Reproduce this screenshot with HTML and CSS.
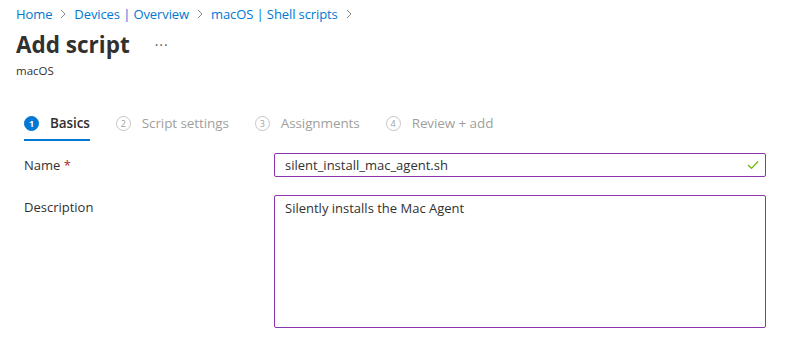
FILE: index.html
```html
<!DOCTYPE html>
<html lang="en">
<head>
    <meta charset="UTF-8">
    <meta name="viewport" content="width=device-width, initial-scale=1.0">
    <title>Add script</title>
    <link rel="stylesheet" href="styles.css">
</head>
<body>

    <!-- Breadcrumb -->
    <nav class="breadcrumb">
        <a href="#">Home</a>
        <svg class="chev" width="8" height="10" viewBox="0 0 8 10"><polyline points="2,1 6,5 2,9" fill="none" stroke="#8a8886" stroke-width="1"/></svg>
        <a href="#">Devices | Overview</a>
        <svg class="chev" width="8" height="10" viewBox="0 0 8 10"><polyline points="2,1 6,5 2,9" fill="none" stroke="#8a8886" stroke-width="1"/></svg>
        <a href="#">macOS | Shell scripts</a>
        <svg class="chev" width="8" height="10" viewBox="0 0 8 10"><polyline points="2,1 6,5 2,9" fill="none" stroke="#8a8886" stroke-width="1"/></svg>
    </nav>

    <header class="page-header">
        <div class="title-row">
            <h1>Add script</h1>
            <span class="more">&middot;&middot;&middot;</span>
        </div>
        <div class="subtitle">macOS</div>
    </header>

    <!-- Wizard steps -->
    <ol class="steps">
        <li class="step active"><span class="num">1</span>Basics</li>
        <li class="step"><span class="num">2</span>Script settings</li>
        <li class="step"><span class="num">3</span>Assignments</li>
        <li class="step"><span class="num">4</span>Review + add</li>
    </ol>

    <section class="form">
        <div class="row">
            <label>Name <span class="req">*</span></label>
            <div class="field">
                <input type="text" value="silent_install_mac_agent.sh">
                <svg class="ok" width="12" height="10" viewBox="0 0 12 10"><polyline points="1,5 4.5,8.5 11,1.5" fill="none" stroke="#6bb700" stroke-width="1.2"/></svg>
            </div>
        </div>
        <div class="row">
            <label>Description</label>
            <textarea>Silently installs the Mac Agent</textarea>
        </div>
    </section>

</body>
</html>
```

FILE: styles.css
```css
body {
    font-family: "Open Sans", "Noto Sans", sans-serif;
    margin: 0;
    padding: 0;
    background: white;
    color: #323130;
}

.breadcrumb {
    display: flex;
    align-items: center;
    gap: 7px;
    padding: 4px 16px 0;
    height: 20px;
    font-size: 13px;
    letter-spacing: -0.1px;
}

.breadcrumb a {
    color: #0078d4;
    text-decoration: none;
}

.page-header {
    padding: 0 16px;
}

.title-row {
    display: flex;
    align-items: center;
    height: 40px;
}

h1 {
    font-size: 22.5px;
    font-weight: 700;
    margin: 0;
    color: #323130;
}

.more {
    margin-left: 25px;
    color: #605e5c;
    font-size: 14px;
    letter-spacing: 1px;
}

.subtitle {
    font-size: 11.5px;
    color: #323130;
    line-height: 14px;
}

.steps {
    list-style: none;
    display: flex;
    margin: 29px 0 0;
    padding: 0 24px;
    height: 34px;
}

.step {
    display: flex;
    align-items: center;
    height: 32px;
    margin-right: 26px;
    font-size: 13.5px;
    letter-spacing: -0.1px;
    color: #a19f9d;
}

.step .num {
    width: 13px;
    height: 13px;
    border: 1px solid #c8c6c4;
    border-radius: 50%;
    font-size: 9px;
    line-height: 13px;
    text-align: center;
    margin-right: 11px;
    color: #a19f9d;
    letter-spacing: 0;
}

.step.active {
    color: #323130;
    font-weight: 600;
    border-bottom: 2px solid #0078d4;
}

.step.active .num {
    background: #0078d4;
    border-color: #0078d4;
    color: white;
    font-weight: 700;
}

.form {
    padding: 12px 33px 0 24px;
}

.row {
    display: grid;
    grid-template-columns: 250px 1fr;
    margin-bottom: 18px;
}

.row label {
    font-size: 13px;
    line-height: 24px;
}

.req {
    color: #a4262c;
}

.field {
    position: relative;
}

input[type="text"], textarea {
    box-sizing: border-box;
    width: 100%;
    font-family: "Open Sans", "Noto Sans", sans-serif;
    font-size: 13px;
    color: #323130;
    border: 1px solid #8a34ad;
    border-radius: 2px;
    padding: 0 10px;
    outline: none;
}

input[type="text"] {
    height: 24px;
}

textarea {
    height: 133px;
    padding-top: 3px;
    resize: none;
}

.ok {
    position: absolute;
    right: 7px;
    top: 7px;
}
```
